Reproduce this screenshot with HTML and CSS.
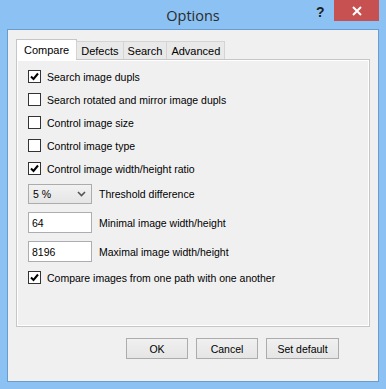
FILE: index.html
```html
<!DOCTYPE html>
<html lang="en">
<head>
    <meta charset="UTF-8">
    <title>Options</title>
    <link rel="stylesheet" href="styles.css">
</head>
<body>
    <div class="window">
        <div class="titlebar">
            <span class="title">Options</span>
            <span class="help-btn">?</span>
            <span class="close-btn">
                <svg width="10" height="10" viewBox="0 0 10 10">
                    <path d="M1 1 L9 9 M9 1 L1 9" stroke="#fff" stroke-width="2"/>
                </svg>
            </span>
        </div>

        <div class="client">
            <div class="tabs">
                <div class="tab active">Compare</div>
                <div class="tab">Defects</div>
                <div class="tab">Search</div>
                <div class="tab">Advanced</div>
            </div>

            <div class="tab-page">
                <label class="check-row">
                    <span class="checkbox checked"></span>
                    Search image dupls
                </label>
                <label class="check-row">
                    <span class="checkbox"></span>
                    Search rotated and mirror image dupls
                </label>
                <label class="check-row">
                    <span class="checkbox"></span>
                    Control image size
                </label>
                <label class="check-row">
                    <span class="checkbox"></span>
                    Control image type
                </label>
                <label class="check-row">
                    <span class="checkbox checked"></span>
                    Control image width/height ratio
                </label>

                <div class="field-row first">
                    <div class="combo">
                        <span>5 %</span>
                        <svg width="9" height="6" viewBox="0 0 9 6">
                            <path d="M1 1 L4.5 4.5 L8 1" fill="none" stroke="#555" stroke-width="1.6"/>
                        </svg>
                    </div>
                    <span class="field-label">Threshold difference</span>
                </div>
                <div class="field-row">
                    <div class="edit">64</div>
                    <span class="field-label">Minimal image width/height</span>
                </div>
                <div class="field-row">
                    <div class="edit">8196</div>
                    <span class="field-label">Maximal image width/height</span>
                </div>

                <label class="check-row last">
                    <span class="checkbox checked"></span>
                    Compare images from one path with one another
                </label>
            </div>

            <div class="buttons">
                <button class="btn">OK</button>
                <button class="btn">Cancel</button>
                <button class="btn wide">Set default</button>
            </div>
        </div>
    </div>
</body>
</html>
```

FILE: styles.css
```css
* {
    margin: 0;
    padding: 0;
    box-sizing: border-box;
}

body {
    font-family: 'Liberation Sans', Arial, sans-serif;
    font-size: 10.5px;
    color: #000;
    background: #8bc2f3;
}

.window {
    width: 386px;
    height: 389px;
    background: #8bc2f3;
    padding: 0 7px 7px 7px;
    display: flex;
    flex-direction: column;
}

/* title bar */
.titlebar {
    height: 29px;
    position: relative;
    display: flex;
    align-items: center;
    justify-content: center;
}

.title {
    font-family: 'Open Sans', 'Liberation Sans', sans-serif;
    font-size: 14.5px;
    color: #2b2b2b;
    margin-top: 1px;
}

.help-btn {
    position: absolute;
    left: 309px;
    top: 4px;
    font-family: 'Liberation Sans', Arial, sans-serif;
    font-weight: bold;
    font-size: 14px;
    color: #1e1e1e;
}

.close-btn {
    position: absolute;
    right: 0;
    top: 0;
    width: 45px;
    height: 21px;
    background: #c75050;
    display: flex;
    align-items: center;
    justify-content: center;
}

/* client area */
.client {
    flex: 1;
    background: #f0f0f0;
    border: 1px solid #6b9ccf;
    padding: 9px 8px 0 8px;
}

.tabs {
    display: flex;
    align-items: flex-end;
    height: 21px;
    margin-bottom: -1px;
    position: relative;
    z-index: 1;
}

.tab {
    height: 18px;
    margin-bottom: 1px;
    padding: 0 4px;
    border: 1px solid #d4d4d4;
    border-bottom: none;
    margin-left: -1px;
    background: #e9e9e9;
    display: flex;
    align-items: center;
    font-size: 11px;
}

.tab.active {
    height: 21px;
    margin-bottom: 0;
    margin-left: 0;
    padding: 0 7px;
    background: #fff;
    border-color: #c6c6c6;
}

.tab-page {
    height: 268px;
    border: 1px solid #c6c6c6;
    box-shadow: inset 0 0 0 1px #fff;
    background: #f0f0f0;
    padding: 5px 11px 0 11px;
}

.check-row {
    height: 23px;
    display: flex;
    align-items: center;
    gap: 6px;
}

.check-row.last {
    margin-top: 4px;
}

.checkbox {
    width: 13px;
    height: 13px;
    border: 1px solid #333;
    background: #fff;
    position: relative;
}

.checkbox.checked::after {
    content: "";
    position: absolute;
    left: 1px;
    top: 1px;
    width: 9px;
    height: 9px;
    background: url("data:image/svg+xml,%3Csvg xmlns='http://www.w3.org/2000/svg' width='9' height='9' viewBox='0 0 9 9'%3E%3Cpath d='M1 4.5 L3.5 7 L8 1.5' fill='none' stroke='%23000' stroke-width='2'/%3E%3C/svg%3E");
}

.field-row {
    display: flex;
    align-items: center;
    gap: 7px;
    margin-top: 8px;
}

.field-row.first {
    margin-top: 4px;
}

.combo {
    width: 64px;
    height: 20px;
    border: 1px solid #acacac;
    background: linear-gradient(#f2f2f2, #e5e5e5);
    display: flex;
    align-items: center;
    justify-content: space-between;
    padding: 0 5px 0 4px;
}

.edit {
    width: 64px;
    height: 21px;
    border: 1px solid #abadb3;
    background: #fff;
    display: flex;
    align-items: center;
    padding-left: 3px;
}

/* bottom buttons */
.buttons {
    display: flex;
    justify-content: flex-end;
    gap: 8px;
    margin-top: 11px;
    padding-right: 31px;
}

.btn {
    width: 62px;
    height: 21px;
    border: 1px solid #acacac;
    background: linear-gradient(#f0f0f0, #e5e5e5);
    font-family: 'Liberation Sans', Arial, sans-serif;
    font-size: 10.5px;
    color: #000;
}

.btn.wide {
    width: 73px;
}
```
